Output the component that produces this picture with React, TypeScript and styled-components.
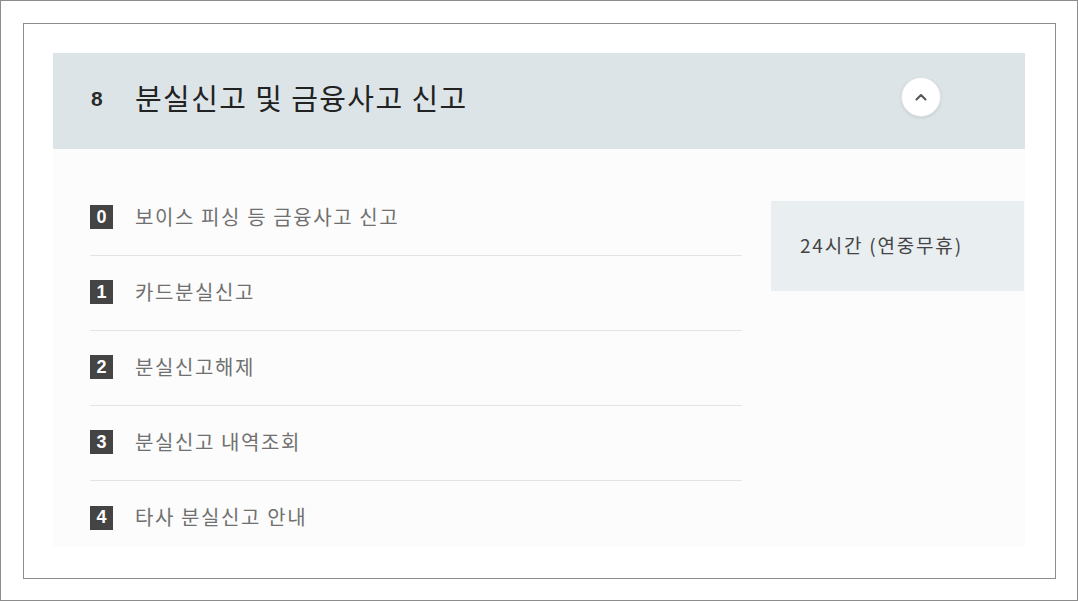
import React from "react";
import styled, { createGlobalStyle } from "styled-components";

const GlobalStyle = createGlobalStyle`
  html, body {
    margin: 0;
    padding: 0;
    background: #ffffff;
  }
  body {
    font-family: "Noto Sans CJK KR", "Noto Sans", sans-serif;
  }
  * {
    box-sizing: border-box;
  }
`;

const Page = styled.div`
  width: 1078px;
  height: 601px;
  border: 1px solid #8c8c8c;
  padding: 22px;
  background: #fff;
`;

const Frame = styled.div`
  width: 1033px;
  height: 556px;
  border: 1px solid #8c8c8c;
  padding: 29px 30px 0 29px;
  background: #fff;
`;

const Header = styled.div`
  height: 96px;
  background: #dde4e8;
  display: flex;
  align-items: center;
  padding: 0 84px 8px 38px;
`;

const HeaderNo = styled.span`
  font-family: "Liberation Sans", Arial, sans-serif;
  font-weight: 700;
  font-size: 21px;
  color: #2a2a2a;
  width: 44px;
  margin-top: 4px;
`;

const HeaderTitle = styled.h2`
  flex: 1;
  margin: 0;
  font-size: 29px;
  font-weight: 400;
  color: #222;
  letter-spacing: 1.4px;
`;

const ToggleButton = styled.button`
  width: 40px;
  height: 40px;
  border-radius: 50%;
  border: 1px solid #e2e2e2;
  background: #fff;
  box-shadow: 0 1px 3px rgba(0, 0, 0, 0.1);
  display: flex;
  align-items: center;
  justify-content: center;
  padding: 0;
  cursor: pointer;
`;

const Body = styled.div`
  height: 398px;
  overflow: hidden;
  background: #fcfcfc;
  display: flex;
  align-items: flex-start;
  padding: 32px 0 0 37px;
`;

const List = styled.ul`
  list-style: none;
  margin: 0;
  padding: 0;
  width: 652px;
`;

const Row = styled.li`
  height: 75px;
  display: flex;
  align-items: center;
  border-bottom: 1px solid #e3e3e3;
  &:last-child {
    border-bottom: none;
  }
`;

const Badge = styled.span`
  width: 23px;
  height: 24px;
  background: #444;
  color: #fff;
  font-family: "Liberation Sans", Arial, sans-serif;
  font-weight: 700;
  font-size: 18px;
  display: flex;
  align-items: center;
  justify-content: center;
  margin-right: 22px;
  margin-top: -2px;
`;

const RowLabel = styled.span`
  font-size: 20px;
  font-weight: 400;
  color: #707070;
  letter-spacing: 1.6px;
  margin-top: -4px;
`;

const InfoBox = styled.div`
  margin: 20px 0 0 29px;
  width: 253px;
  height: 90px;
  background: #e9eef1;
  display: flex;
  align-items: center;
  padding: 0 0 3px 29px;
  font-size: 19px;
  color: #444;
  letter-spacing: 1.8px;
`;

const items = [
  "보이스 피싱 등 금융사고 신고",
  "카드분실신고",
  "분실신고해제",
  "분실신고 내역조회",
  "타사 분실신고 안내",
];

export default function App() {
  return (
    <>
      <GlobalStyle />
      <Page>
        <Frame>
          <Header>
            <HeaderNo>8</HeaderNo>
            <HeaderTitle>분실신고 및 금융사고 신고</HeaderTitle>
            <ToggleButton aria-label="접기">
              <svg width="12" height="8" viewBox="0 0 12 8">
                <path
                  d="M1.5 6.5 L6 2 L10.5 6.5"
                  fill="none"
                  stroke="#555"
                  strokeWidth="2"
                  strokeLinecap="round"
                  strokeLinejoin="round"
                />
              </svg>
            </ToggleButton>
          </Header>
          <Body>
            <List>
              {items.map((label, i) => (
                <Row key={label}>
                  <Badge>{i}</Badge>
                  <RowLabel>{label}</RowLabel>
                </Row>
              ))}
            </List>
            <InfoBox>24시간 (연중무휴)</InfoBox>
          </Body>
        </Frame>
      </Page>
    </>
  );
}
